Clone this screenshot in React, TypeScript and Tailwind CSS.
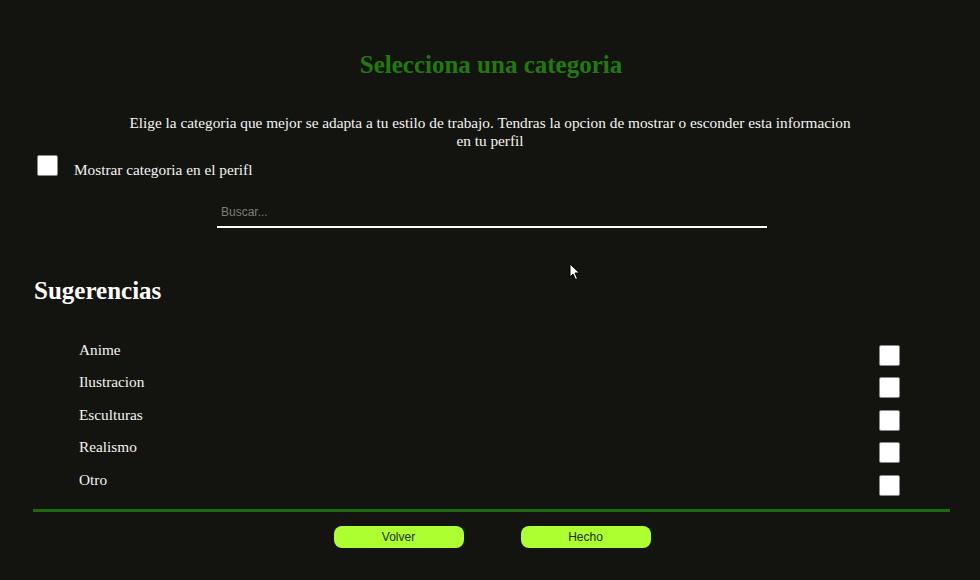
import React from 'react';

const categorias = ['Anime', 'Ilustracion', 'Esculturas', 'Realismo', 'Otro'];

const Box: React.FC<{ className?: string }> = ({ className = '' }) => (
  <input
    type="checkbox"
    className={`appearance-none bg-white border border-[#8a8a8a] rounded-[2px] shrink-0 ${className}`}
  />
);

const App: React.FC = () => {
  return (
    <div className="relative h-[580px] overflow-hidden bg-[#131410] text-[#f4f4f0] font-['Liberation_Serif','Times_New_Roman',serif]">
      <div className="pt-[51px]">
        <h1 className="text-center text-[25px] leading-[28px] font-bold text-[#227a0d] pl-[2px]">Selecciona una categoria</h1>

        <p className="mx-auto mt-[35px] w-[730px] text-center text-[15.3px] leading-[18px]">
          Elige la categoria que mejor se adapta a tu estilo de trabajo. Tendras la opcion de mostrar o esconder esta informacion en tu perfil
        </p>

        <div className="mt-[5px] flex items-start pl-[37px]">
          <Box className="w-[21px] h-[21px]" />
          <span className="ml-[16px] mt-[6px] text-[15.3px] leading-[18px]">Mostrar categoria en el perifl</span>
        </div>

        <div className="mx-auto mt-[20px] w-[550px] border-b-2 border-white pb-[3px] pl-[4px] translate-x-[2px]">
          <input
            type="text"
            placeholder="Buscar..."
            className="w-full bg-transparent text-[12px] leading-[14px] text-white outline-none placeholder:text-[#7d7d7a] font-['Liberation_Sans',Arial,sans-serif]"
          />
        </div>

        <h2 className="mt-[49px] pl-[34px] text-[25px] leading-[28px] font-bold text-white">Sugerencias</h2>

        <div className="mt-[38px] flex flex-col">
          {categorias.map((c) => (
            <div key={c} className="flex h-[32.4px] items-start justify-between pl-[79px] pr-[80px]">
              <span className="-mt-[2px] text-[15.3px] leading-[18px]">{c}</span>
              <Box className="mt-[2px] w-[21px] h-[21px]" />
            </div>
          ))}
        </div>

        <div className="ml-[33px] mr-[30px] mt-[4px] h-[3px] bg-[#1b6b0a]" />

        <div className="mt-[14px] flex justify-center gap-[57px] pl-[4px] font-['Liberation_Sans',Arial,sans-serif]">
          <button className="h-[22px] w-[130px] rounded-[8px] bg-[#adff2f] text-[12px] text-[#1f2a10]">Volver</button>
          <button className="h-[22px] w-[130px] rounded-[8px] bg-[#adff2f] text-[12px] text-[#1f2a10]">Hecho</button>
        </div>
      </div>

      <svg className="absolute left-[569px] top-[263px]" width="12" height="18" viewBox="0 0 12 18">
        <path d="M1 1 L1 14 L4 11 L6.5 16.5 L8.5 15.5 L6 10 L10.5 10 Z" fill="#fff" stroke="#000" strokeWidth="1" />
      </svg>
    </div>
  );
};

export default App;
